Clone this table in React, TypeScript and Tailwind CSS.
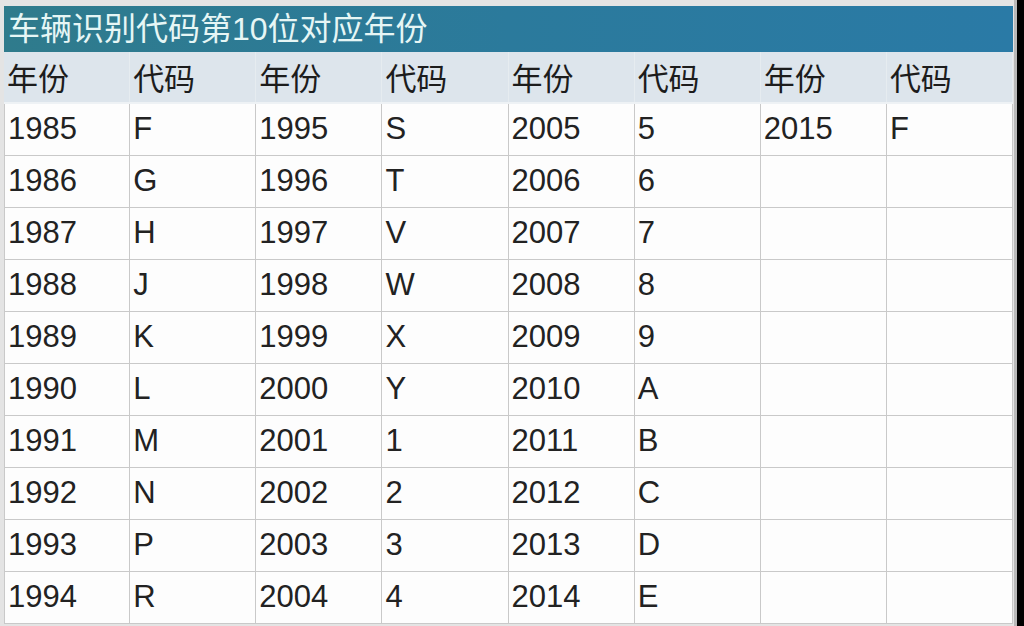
// VIN 第10位 年份对照表
const FONT = { fontFamily: '"Liberation Sans", "Noto Sans CJK SC", Arial, sans-serif' };

const groups: [string, string][][] = [
  [
    ['1985', 'F'], ['1986', 'G'], ['1987', 'H'], ['1988', 'J'], ['1989', 'K'],
    ['1990', 'L'], ['1991', 'M'], ['1992', 'N'], ['1993', 'P'], ['1994', 'R'],
  ],
  [
    ['1995', 'S'], ['1996', 'T'], ['1997', 'V'], ['1998', 'W'], ['1999', 'X'],
    ['2000', 'Y'], ['2001', '1'], ['2002', '2'], ['2003', '3'], ['2004', '4'],
  ],
  [
    ['2005', '5'], ['2006', '6'], ['2007', '7'], ['2008', '8'], ['2009', '9'],
    ['2010', 'A'], ['2011', 'B'], ['2012', 'C'], ['2013', 'D'], ['2014', 'E'],
  ],
  [['2015', 'F']],
];

export default function App() {
  const rows = Array.from({ length: 10 }, (_, r) =>
    groups.flatMap(g => (g[r] ? [g[r][0], g[r][1]] : ['', '']))
  );

  return (
    <div className="w-[1024px] h-[626px] bg-black overflow-hidden" style={FONT}>
      <div className="w-[1017px] h-full bg-[#e4e4e4] pt-[6px] pl-[4px] pr-[4px] border-r-[3px] border-[#b9b9b9]">
        <div className="w-[1009px] bg-white">
          {/* 标题 */}
          <div className="h-[46px] flex items-center pl-[4px] bg-gradient-to-r from-[#2f7b8c] via-[#2b7a9c] to-[#2a7aa6]">
            <span className="text-[32px] leading-none text-[#e6f6f5]">
              车辆识别代码第10位对应年份
            </span>
          </div>

          {/* 表头 */}
          <div className="grid grid-cols-8 h-[52px] bg-[#dde5ec] border-b-2 border-[#eef2f5]">
            {Array.from({ length: 8 }, (_, i) => (
              <div
                key={i}
                className="flex items-center pl-[3px] pt-[4px] text-[31px] leading-none text-[#1c1c1c] border-r border-[#e6ecf0]"
              >
                {i % 2 === 0 ? '年份' : '代码'}
              </div>
            ))}
          </div>

          {/* 数据 */}
          {rows.map((row, r) => (
            <div key={r} className="grid grid-cols-8 h-[52px] bg-[#fdfdfd]">
              {row.map((v, c) => (
                <div
                  key={c}
                  className={`flex items-center pl-[3px] pb-[2px] text-[31px] leading-none text-[#222222] border-b border-r border-[#c9c9c9] ${
                    c === 0 ? 'border-l' : ''
                  }`}
                >
                  {v}
                </div>
              ))}
            </div>
          ))}
        </div>
      </div>
    </div>
  );
}
